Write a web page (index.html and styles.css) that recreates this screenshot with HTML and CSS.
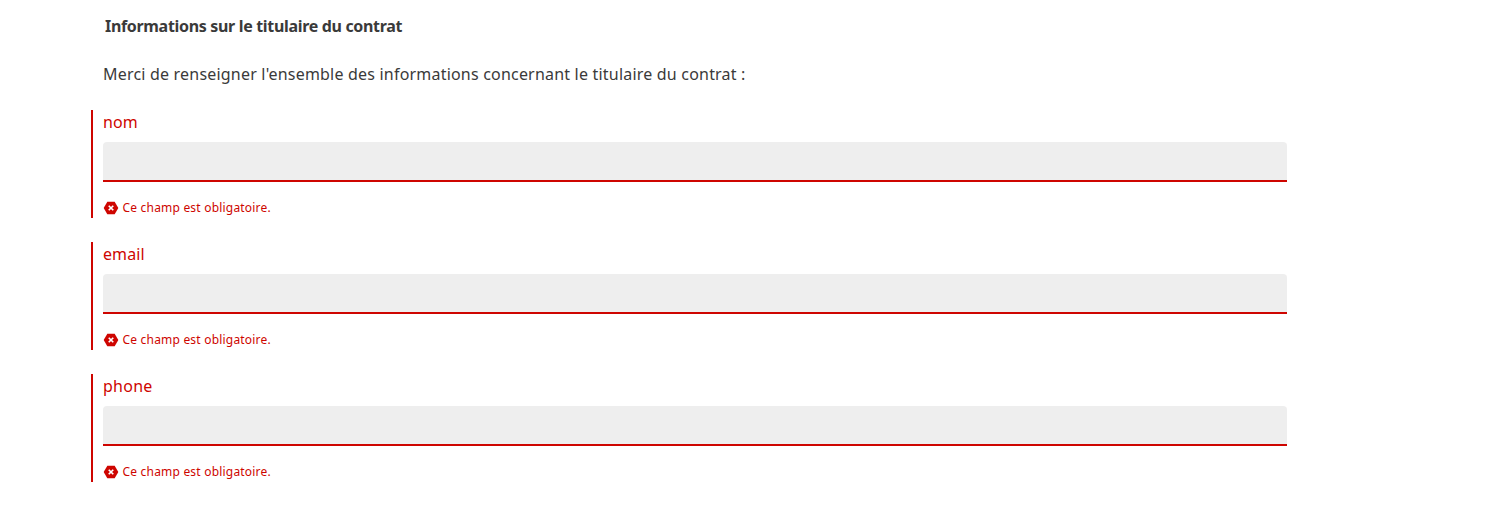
FILE: index.html
```html
<!DOCTYPE html>
<html lang="fr">
<head>
<meta charset="utf-8">
<title>Titulaire du contrat</title>
<link rel="stylesheet" href="styles.css">
</head>
<body>
<form class="form">
  <h2 class="legend">Informations sur le titulaire du contrat</h2>
  <p class="intro">Merci de renseigner l'ensemble des informations concernant le titulaire du contrat :</p>
  <div class="group">
    <label class="label" for="nom">nom</label>
    <input class="input" id="nom" type="text">
    <p class="error"><svg class="icon" viewBox="0 0 24 24"><path class="hexagon" d="M17.5 2.5 23 12l-5.5 9.5h-11L1 12l5.5-9.5Z"/><path class="cross" d="m8.6 8.6 6.8 6.8m0-6.8-6.8 6.8"/></svg><span>Ce champ est obligatoire.</span></p>
  </div>
  <div class="group">
    <label class="label" for="email">email</label>
    <input class="input" id="email" type="text">
    <p class="error"><svg class="icon" viewBox="0 0 24 24"><path class="hexagon" d="M17.5 2.5 23 12l-5.5 9.5h-11L1 12l5.5-9.5Z"/><path class="cross" d="m8.6 8.6 6.8 6.8m0-6.8-6.8 6.8"/></svg><span>Ce champ est obligatoire.</span></p>
  </div>
  <div class="group">
    <label class="label label-phone" for="phone">phone</label>
    <input class="input" id="phone" type="text">
    <p class="error"><svg class="icon" viewBox="0 0 24 24"><path class="hexagon" d="M17.5 2.5 23 12l-5.5 9.5h-11L1 12l5.5-9.5Z"/><path class="cross" d="m8.6 8.6 6.8 6.8m0-6.8-6.8 6.8"/></svg><span>Ce champ est obligatoire.</span></p>
  </div>
</form>
</body>
</html>
```
FILE: styles.css
```css
* { box-sizing: border-box; }
body {
  margin: 0;
  background: #fff;
  color: #3a3a3a;
  font: 16px/24px "Noto Sans", sans-serif;
}
.form {
  display: flex;
  flex-direction: column;
  gap: 24px;
  width: 1196px;
  margin-left: 91px;
  padding-top: 14px;
}
.legend {
  margin: 0;
  padding-left: 14px;
  font-size: 16px;
  line-height: 24px;
  font-weight: 700;
  letter-spacing: -0.325px;
  white-space: nowrap;
}
.intro { margin: 0; padding-left: 12px; letter-spacing: 0.2px; white-space: nowrap; }
.group {
  display: flex;
  flex-direction: column;
  height: 108px;
  padding-left: 10px;
  border-left: 2px solid #ce0500;
}
.label { color: #ce0500; height: 24px; align-self: flex-start; letter-spacing: 0.1px; }
.label-phone { letter-spacing: 0.25px; }
.input {
  width: 100%;
  height: 40px;
  margin: 8px 0 16px;
  padding: 8px 16px;
  border: 0;
  border-radius: 4px 4px 0 0;
  background: #eee;
  box-shadow: inset 0 -2px 0 #ce0500;
  outline: none;
  font: inherit;
}
.error {
  display: flex;
  align-items: center;
  gap: 3.5px;
  margin: 0;
  color: #ce0500;
  font-size: 12px;
  line-height: 20px;
  letter-spacing: 0.2px;
}
.icon { width: 16px; height: 16px; }
.hexagon { fill: #ce0500; }
.cross { fill: none; stroke: #fff; stroke-width: 2.5; }
```
